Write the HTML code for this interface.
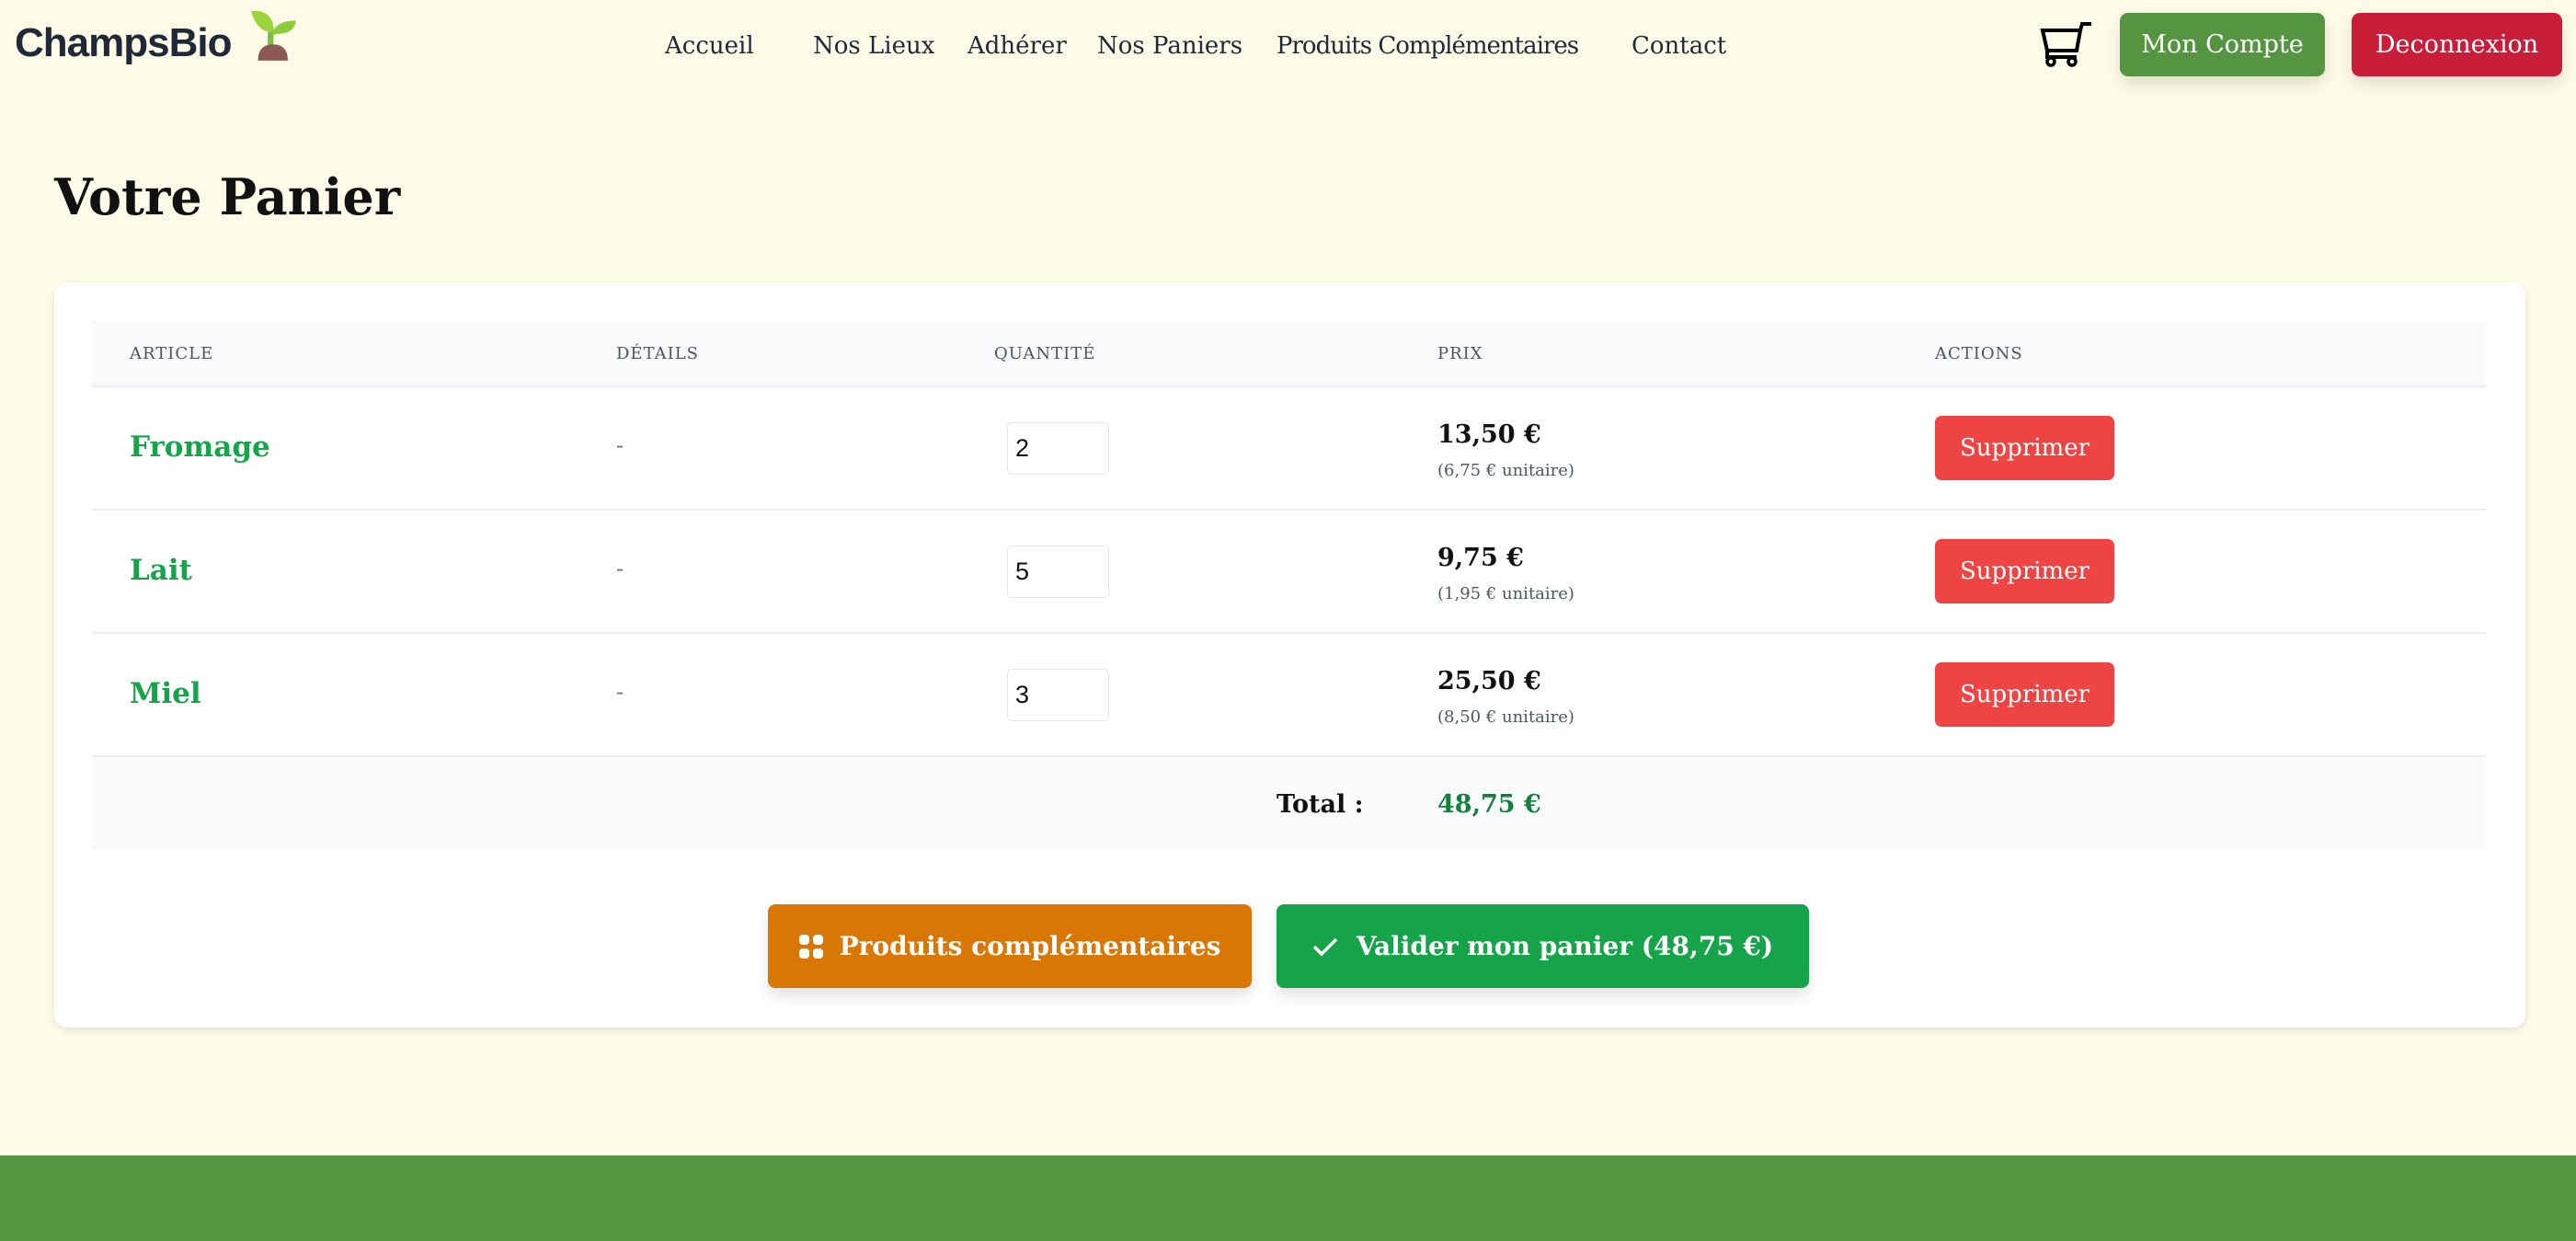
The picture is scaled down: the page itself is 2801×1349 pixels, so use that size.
<!DOCTYPE html>
<html><head><meta charset="utf-8"><style>
*{margin:0;padding:0;box-sizing:border-box}
body{width:2801px;height:1349px;background:#fefbe8;font-family:"DejaVu Serif","Liberation Serif",serif;color:#111;position:relative;overflow:hidden}
.a{position:absolute;white-space:nowrap}
.nav{font-size:26px;top:35px;color:#1f2937}
.btn{position:absolute;color:#fff;display:flex;align-items:center;justify-content:center;border-radius:9px;font-size:26px;box-shadow:0 8px 16px rgba(0,0,0,.12)}
.th{font-size:18px;color:#4b5563;letter-spacing:1px;top:374px}
.name{font-size:31px;font-weight:bold;color:#16a34a;left:141px}
.dash{left:670px;font-size:24px;color:#6b7280}
.inp{position:absolute;left:1095px;width:111px;height:57px;background:#fff;border:1px solid #e5e7eb;border-radius:5px;font-family:"Liberation Sans",sans-serif;font-size:27px;padding:12px 0 0 8px}
.pr{left:1563px;font-size:27px;font-weight:bold}
.sub{left:1563px;font-size:18px;color:#4b5563}
.sup{position:absolute;left:2104px;width:195px;height:70px;background:#ef4444;color:#fff;border-radius:7px;font-size:26px;display:flex;align-items:center;justify-content:center}
.line{position:absolute;left:100px;width:2603px;height:2px;background:#eceef1}
</style></head><body>
<div class="a" style="left:16px;top:22px;font-family:'Liberation Sans',sans-serif;font-weight:bold;font-size:44px;color:#1f2937;letter-spacing:-1px">ChampsBio</div>
<svg class="a" style="left:273px;top:12px" width="50" height="56" viewBox="0 0 40 54" preserveAspectRatio="none"><path d="M17 16 V40" stroke="#7bc043" stroke-width="5"/><path d="M0 0 Q14 -2 19 12 Q19 20 18 22 Q5 22 0 0Z" fill="#9bd43c"/><path d="M18 26 Q20 10 39 10 Q38 24 22 24Z" fill="#8ccc3a"/><path d="M6 52 Q6 35 19 35 Q32 35 32 52Z" fill="#8c5a52"/></svg>
<div class="a nav" style="left:723px">Accueil</div>
<div class="a nav" style="left:884px">Nos Lieux</div>
<div class="a nav" style="left:1052px">Adhérer</div>
<div class="a nav" style="left:1193px">Nos Paniers</div>
<div class="a nav" style="left:1388px;letter-spacing:-1px">Produits Complémentaires</div>
<div class="a nav" style="left:1774px">Contact</div>
<svg class="a" style="left:2218px;top:24px" width="62" height="50" viewBox="0 0 62 50"><path d="M3 9 H44 L40 31 H8 Z" fill="none" stroke="#000" stroke-width="4"/><path d="M44 9 L46 2 H56" fill="none" stroke="#000" stroke-width="4"/><path d="M8 31 V38 H40" fill="none" stroke="#000" stroke-width="4"/><circle cx="12" cy="43" r="4" fill="none" stroke="#000" stroke-width="3.5"/><circle cx="35" cy="43" r="4" fill="none" stroke="#000" stroke-width="3.5"/></svg>
<div class="btn" style="left:2305px;top:14px;width:223px;height:69px;background:#559542;font-size:27px">Mon Compte</div>
<div class="btn" style="left:2557px;top:14px;width:229px;height:69px;background:#c81e3a;font-size:27px">Deconnexion</div>
<div class="a" style="left:59px;top:182px;font-size:54px;font-weight:bold">Votre Panier</div>
<div class="a" style="left:59px;top:307px;width:2687px;height:810px;background:#fff;border-radius:14px;box-shadow:0 3px 8px rgba(0,0,0,.1)"></div>
<div class="a" style="left:100px;top:348px;width:2603px;height:72px;background:#f8fafc"></div>
<div class="a th" style="left:141px">ARTICLE</div>
<div class="a th" style="left:670px">DÉTAILS</div>
<div class="a th" style="left:1081px">QUANTITÉ</div>
<div class="a th" style="left:1563px">PRIX</div>
<div class="a th" style="left:2104px">ACTIONS</div>
<div class="line" style="top:419px"></div>
<div class="line" style="top:553px"></div>
<div class="line" style="top:687px"></div>
<div class="line" style="top:821px"></div>

<div class="a name" style="top:468px">Fromage</div><div class="a dash" style="top:470px">-</div>
<div class="inp" style="top:459px">2</div>
<div class="a pr" style="top:457px">13,50 €</div><div class="a sub" style="top:501px">(6,75 € unitaire)</div>
<div class="sup" style="top:452px">Supprimer</div>

<div class="a name" style="top:602px">Lait</div><div class="a dash" style="top:604px">-</div>
<div class="inp" style="top:593px">5</div>
<div class="a pr" style="top:591px">9,75 €</div><div class="a sub" style="top:635px">(1,95 € unitaire)</div>
<div class="sup" style="top:586px">Supprimer</div>

<div class="a name" style="top:736px">Miel</div><div class="a dash" style="top:738px">-</div>
<div class="inp" style="top:727px">3</div>
<div class="a pr" style="top:725px">25,50 €</div><div class="a sub" style="top:769px">(8,50 € unitaire)</div>
<div class="sup" style="top:720px">Supprimer</div>

<div class="a" style="left:100px;top:823px;width:2603px;height:102px;background:#f8fafc"></div>
<div class="a" style="left:1388px;top:859px;font-size:27px;font-weight:bold">Total :</div>
<div class="a" style="left:1563px;top:859px;font-size:27px;font-weight:bold;color:#15803d">48,75 €</div>

<div class="btn" style="left:835px;top:983px;width:526px;height:91px;background:#d97706;font-size:28px;font-weight:bold;border-radius:8px">
<svg width="26" height="26" viewBox="0 0 26 26" style="margin-right:18px"><rect x="0" y="0" width="11" height="11" rx="4" fill="#fff"/><rect x="15" y="0" width="11" height="11" rx="4" fill="#fff"/><rect x="0" y="15" width="11" height="11" rx="4" fill="#fff"/><rect x="15" y="15" width="11" height="11" rx="4" fill="#fff"/></svg>Produits complémentaires</div>
<div class="btn" style="left:1388px;top:983px;width:579px;height:91px;background:#16a34a;font-size:28px;font-weight:bold;border-radius:8px">
<svg width="28" height="22" viewBox="0 0 28 22" style="margin-right:20px"><path d="M2 11 L10 19 L26 3" fill="none" stroke="#fff" stroke-width="3.5"/></svg>Valider mon panier (48,75 €)</div>

<div class="a" style="left:0;top:1256px;width:2801px;height:93px;background:#559542"></div>
</body></html>
